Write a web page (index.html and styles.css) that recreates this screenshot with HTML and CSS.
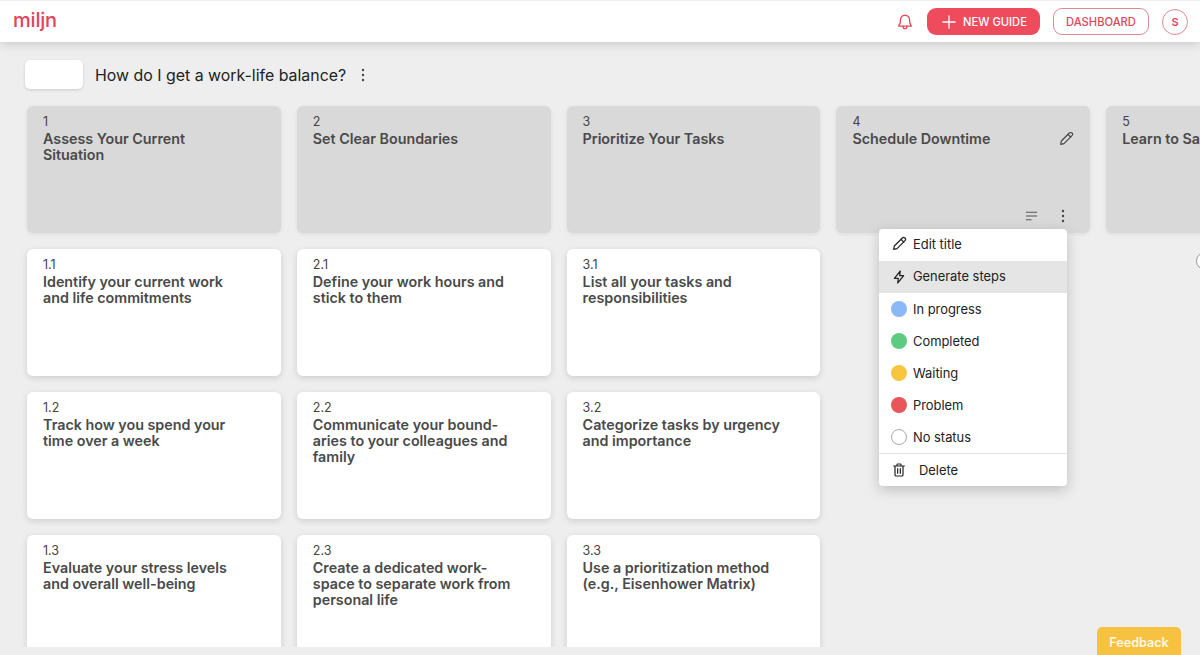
FILE: index.html
```html
<!DOCTYPE html>
<html lang="en">
<head>
<meta charset="utf-8">
<title>miljn</title>
<link rel="stylesheet" href="styles.css">
</head>
<body>
<header class="topbar">
  <div class="logo">miljn</div>
  <div class="actions">
    <svg class="bell" viewBox="0 0 24 24" width="18" height="18" fill="none" stroke="#e8485a" stroke-width="1.8" stroke-linecap="round" stroke-linejoin="round"><path d="M6 9a6 6 0 0 1 12 0c0 5 1.200 7 2.500 8.500h-17C4.800 16 6 14 6 9z"/><path d="M9.500 17.500v.8a2.500 2.500 0 0 0 5 0v-.8"/></svg>
    <button class="btn primary"><svg viewBox="0 0 16 16" width="14" height="14" fill="none" stroke="#fff" stroke-width="1.500" stroke-linecap="round"><path d="M8 1v14M1 8h14"/></svg><span>NEW GUIDE</span></button>
    <button class="btn outline">DASHBOARD</button>
    <div class="avatar">S</div>
  </div>
</header>
<main class="main">
  <div class="title-row">
    <div class="title-box"></div>
    <h1 class="title">How do I get a work-life balance?</h1>
    <svg class="kebab" viewBox="0 0 4 14" width="4" height="14" fill="#444"><circle cx="2" cy="2" r="1.200"/><circle cx="2" cy="7" r="1.200"/><circle cx="2" cy="12" r="1.200"/></svg>
  </div>
  <div class="board">
    <section class="col">
      <div class="card head"><div class="num">1</div><div class="name">Assess Your Current Situation</div></div>
      <div class="card"><div class="num">1.1</div><div class="name">Identify your current work and life commitments</div></div>
      <div class="card"><div class="num">1.2</div><div class="name">Track how you spend your time over a week</div></div>
      <div class="card"><div class="num">1.3</div><div class="name">Evaluate your stress levels and overall well-being</div></div>
    </section>
    <section class="col">
      <div class="card head"><div class="num">2</div><div class="name">Set Clear Boundaries</div></div>
      <div class="card"><div class="num">2.1</div><div class="name">Define your work hours and stick to them</div></div>
      <div class="card"><div class="num">2.2</div><div class="name">Communicate your bound-<br>aries to your colleagues and family</div></div>
      <div class="card"><div class="num">2.3</div><div class="name">Create a dedicated work-<br>space to separate work from personal life</div></div>
    </section>
    <section class="col">
      <div class="card head"><div class="num">3</div><div class="name">Prioritize Your Tasks</div></div>
      <div class="card"><div class="num">3.1</div><div class="name">List all your tasks and responsibilities</div></div>
      <div class="card"><div class="num">3.2</div><div class="name">Categorize tasks by urgency and importance</div></div>
      <div class="card"><div class="num">3.3</div><div class="name">Use a prioritization method (e.g., Eisenhower Matrix)</div></div>
    </section>
    <section class="col">
      <div class="card head active">
        <div class="num">4</div><div class="name">Schedule Downtime</div>
        <svg class="edit" viewBox="0 0 24 24" width="16" height="16" fill="none" stroke="#444" stroke-width="1.700" stroke-linecap="round" stroke-linejoin="round"><path d="M4 20l1-5L17 3a2.800 2.800 0 0 1 4 4L9 19z"/><path d="M15 5l4 4"/></svg>
        <div class="head-tools">
          <svg viewBox="0 0 14 10" width="13" height="10" fill="none" stroke="#555" stroke-width="1.200"><path d="M1 1h12M1 5h12M1 9h6"/></svg>
          <svg viewBox="0 0 4 14" width="4" height="14" fill="#444"><circle cx="2" cy="2" r="1.200"/><circle cx="2" cy="7" r="1.200"/><circle cx="2" cy="12" r="1.200"/></svg>
        </div>
      </div>
      <div class="menu">
        <div class="item edit-row"><svg viewBox="0 0 24 24" width="16" height="16" fill="none" stroke="#222" stroke-width="1.800" stroke-linecap="round" stroke-linejoin="round"><path d="M4 20l1-5L17 3a2.800 2.800 0 0 1 4 4L9 19z"/><path d="M15 5l4 4"/></svg>Edit title</div>
        <div class="item hover"><svg viewBox="0 0 24 24" width="16" height="16" fill="none" stroke="#222" stroke-width="1.800" stroke-linecap="round" stroke-linejoin="round"><path d="M14 3L5 14h6l-1 7 9-11h-6z"/></svg>Generate steps</div>
        <div class="item status"><span class="dot blue"></span>In progress</div>
        <div class="item status"><span class="dot green"></span>Completed</div>
        <div class="item status"><span class="dot yellow"></span>Waiting</div>
        <div class="item status"><span class="dot red"></span>Problem</div>
        <div class="item status"><span class="dot none"></span>No status</div>
        <div class="item delete"><svg viewBox="0 0 24 24" width="16" height="16" fill="none" stroke="#222" stroke-width="1.800" stroke-linecap="round" stroke-linejoin="round"><path d="M4 6h16M9 6V4a1 1 0 0 1 1-1h4a1 1 0 0 1 1 1v2M6 6v13a2 2 0 0 0 2 2h8a2 2 0 0 0 2-2V6M10 10v7M14 10v7"/></svg>Delete</div>
      </div>
    </section>
    <section class="col">
      <div class="card head"><div class="num">5</div><div class="name">Learn to Say No</div></div>
      <div class="add-circle"></div>
    </section>
  </div>
</main>
<button class="feedback">Feedback</button>
</body>
</html>
```
FILE: styles.css
```css
* { box-sizing: border-box; }
html, body { margin: 0; height: 655px; overflow: hidden; }
body { background: #eeeeee; font-family: Inter, "Liberation Sans", sans-serif; color: #222; position: relative; }
.topbar {
  height: 42px; background: #fff; border-top: 1px solid #eeeeee;
  display: flex; align-items: center; justify-content: space-between;
  padding: 0 12px 0 13px; box-shadow: 0 2px 10px rgba(0,0,0,.16); position: relative; z-index: 2;
}
.logo { color: #e2445a; font-size: 20px; font-weight: 500; letter-spacing: -0.2px; line-height: 1; margin-top: -4px; }
.actions { display: flex; align-items: center; }
.bell { margin-right: 13px; }
.btn { font-family: inherit; font-size: 11.200px; font-weight: 500; border-radius: 9px; height: 27px; display: flex; align-items: center; justify-content: center; padding: 0; }
.primary { width: 113px; background: #ee4b5c; color: #fff; border: 0; gap: 7px; margin-right: 13px; justify-content: flex-start; padding-left: 15px; }
.outline { width: 96px; background: #fff; color: #d9485a; border: 1px solid #e08a94; margin-right: 13px; }
.avatar { width: 26px; height: 26px; border-radius: 50%; border: 1px solid #e08a94; color: #d9485a; font-size: 11px; font-weight: 600; display: flex; align-items: center; justify-content: center; }
.main { height: 605px; overflow: hidden; padding: 18px 0 0 27px; }
.title-row { display: flex; align-items: center; height: 29px; margin-left: -2px; margin-bottom: 17px; }
.title-box { width: 58px; height: 29px; background: #fff; border-radius: 5px; box-shadow: 0 1px 3px rgba(0,0,0,.15); margin-right: 12px; }
.title { font-size: 15.900px; font-weight: 400; margin: 1px 15px 0 0; color: #222; }
.board { display: flex; gap: 16px; width: 1400px; }
.col { width: 253.800px; flex: none; display: flex; flex-direction: column; gap: 16px; position: relative; }
.card { height: 127px; background: #fff; border-radius: 6px; padding: 7px 16px; box-shadow: 0 2px 6px rgba(0,0,0,.14); position: relative; color: #4a4a4a; }
.head { background: #d9d9d9; box-shadow: 0 1px 4px rgba(0,0,0,.08); }
.num { font-size: 12.500px; line-height: 17px; margin-bottom: 1px; color: #444; }
.name { font-size: 14.300px; line-height: 16px; font-weight: 600; color: #4a4a4a; max-width: 203px; }
.edit { position: absolute; top: 25px; right: 16px; }
.head-tools { position: absolute; right: 25px; bottom: 10px; display: flex; align-items: center; gap: 23px; }
.menu { position: absolute; top: 123px; left: 42.600px; width: 188px; background: #fff; border-radius: 4px; box-shadow: 0 4px 14px rgba(0,0,0,.2); z-index: 3; font-size: 12.900px; color: #222; }
.item { height: 32px; display: flex; align-items: center; gap: 6px; padding: 0 12px; }
.edit-row { padding-bottom: 2px; }
.item.hover { background: #e5e5e5; padding-bottom: 1px; }
.delete { border-top: 1px solid #e3e3e3; height: 33px; gap: 12px; }
.dot { width: 16px; height: 16px; border-radius: 50%; flex: none; }
.blue { background: #8ab8f8; }
.green { background: #5ccb82; }
.yellow { background: #f8c53f; }
.red { background: #e8555a; }
.none { background: #fff; border: 1px solid #aaa; }
.add-circle { position: absolute; top: 146px; left: 90px; width: 18px; height: 18px; border-radius: 50%; border: 1px solid #999; background: #fff; }
.feedback { position: absolute; right: 19px; bottom: -6px; width: 84px; height: 34px; background: #f7c241; color: #fff8e6; border: 0; border-radius: 5px 5px 0 0; font-family: inherit; font-size: 12.600px; font-weight: 600; padding: 0 0 4px; }
```
